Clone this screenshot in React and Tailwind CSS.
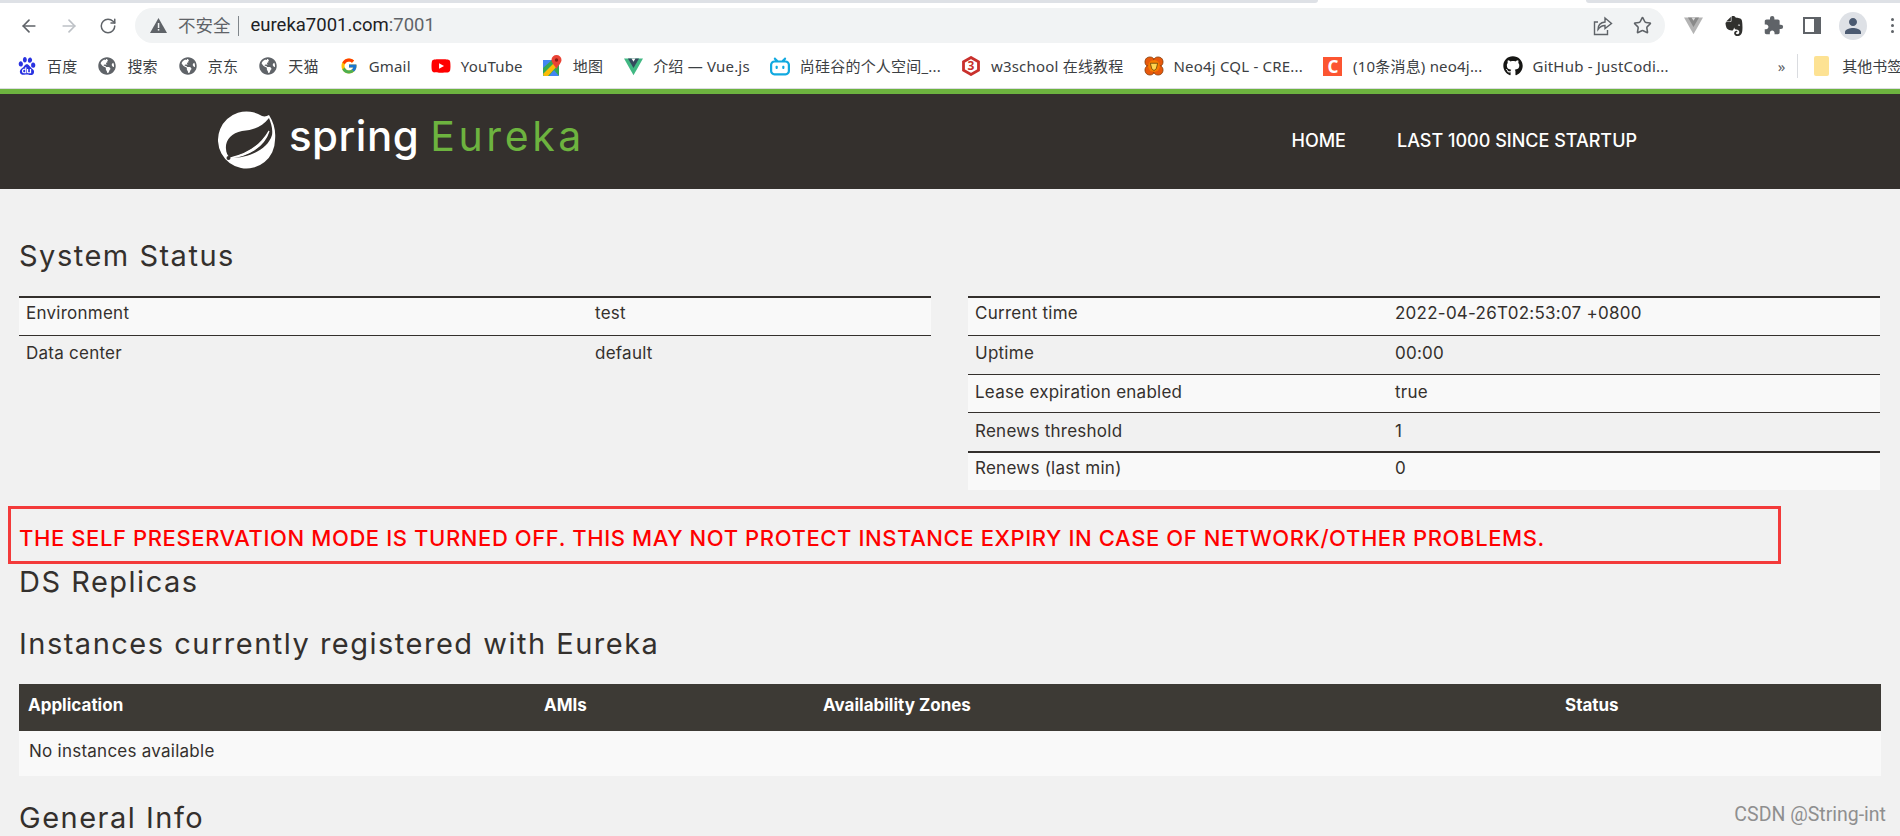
import React from 'react';
import { ArrowLeft, ArrowRight, RotateCw, Star } from 'lucide-react';
import { FaGithub, FaGlobeAmericas, FaYoutube } from 'react-icons/fa';
import { FcGoogle } from 'react-icons/fc';
import { MdExtension, MdPerson } from 'react-icons/md';
import { SiBaidu, SiBilibili, SiEvernote } from 'react-icons/si';

const ui = { fontFamily: '"Noto Sans", "Noto Sans CJK SC", sans-serif' };
const page = { fontFamily: 'Inter, "Noto Sans", sans-serif' };

function VueIcon({ size = 19, gray = false }) {
  return (
    <svg width={size} height={size} viewBox="0 0 24 24">
      <polygon points="0,2 24,2 12,23" fill={gray ? '#b4b4b4' : '#41b883'} />
      <polygon points="5,2 19,2 12,14" fill={gray ? '#8a8a8a' : '#35495e'} />
      <polygon points="9.500,2 14.500,2 12,6" fill={gray ? '#d8d8d8' : '#ffffff'} />
    </svg>
  );
}

function MapIcon() {
  return (
    <svg width="19" height="22" viewBox="0 0 19 22">
      <rect x="0" y="5" width="16" height="16" rx="1" fill="#34a853" />
      <polygon points="0,19 13,6 16,9 5,21 1,21" fill="#fbbc04" />
      <polygon points="0,5 9,5 0,13" fill="#4285f4" />
      <polygon points="6,21 11,15 16,21" fill="#4285f4" />
      <path d="M13.500 0a5 5 0 0 1 5 5c0 3-3 5-5 9-2-4-5-6-5-9a5 5 0 0 1 5-5z" fill="#ea4335" />
      <circle cx="13.500" cy="5" r="1.700" fill="#8c1c13" />
    </svg>
  );
}

function W3Icon() {
  return (
    <div className="relative w-[18px] h-[20px] flex items-center justify-center">
      <svg className="absolute inset-0" width="18" height="20" viewBox="0 0 18 20">
        <polygon points="9,1.500 16.500,5.700 16.500,14.300 9,18.500 1.500,14.300 1.500,5.700" fill="none" stroke="#c9302c" strokeWidth="2.800" />
      </svg>
      <span className="relative text-[12px] font-bold text-[#c9302c] leading-none">3</span>
    </div>
  );
}

function NeoIcon() {
  return (
    <svg width="22" height="22" viewBox="0 0 22 22">
      <circle cx="6.500" cy="6.500" r="5.500" fill="#e8590c" stroke="#7a3b0a" strokeWidth="0.800" />
      <circle cx="15.500" cy="6.500" r="5.500" fill="#e8590c" stroke="#7a3b0a" strokeWidth="0.800" />
      <circle cx="6.500" cy="15.500" r="5.500" fill="#e8590c" stroke="#7a3b0a" strokeWidth="0.800" />
      <circle cx="15.500" cy="15.500" r="5.500" fill="#e8590c" stroke="#7a3b0a" strokeWidth="0.800" />
      <circle cx="11" cy="11" r="6.500" fill="#f57c00" />
      <path d="M7 8h8l-1.500 6L11 16l-2.500-2z" fill="#ffd54f" stroke="#5d3a00" strokeWidth="0.800" />
    </svg>
  );
}

function SpringLeaf() {
  return (
    <svg width="58" height="58" viewBox="0 0 58 58" className="mt-[6px]">
      <path d="M51 4C56 12 58 20 57 29A28.500 28.500 0 1 1 44 5C47 6 49 5 51 4z" fill="#ffffff" />
      <path d="M51 7C44 16 36 19 24 20 13 22 7 30 8 38 8 42 10 45 12 47 32 47 50 38 54 24 55 18 53 12 51 7z" fill="#34302d" />
      <path d="M12 47C26 44 42 36 51 20 46 36 30 45 12 47z" fill="#ffffff" stroke="#ffffff" strokeWidth="1.200" />
      <circle cx="10.500" cy="47" r="2" fill="#34302d" />
    </svg>
  );
}

function Bookmark({ icon, label }) {
  return (
    <div className="flex items-center gap-[10px] shrink-0">
      <div className="w-[20px] flex justify-center">{icon}</div>
      <span className="text-[15px] leading-none tracking-[0.2px] text-[#3c4043] whitespace-nowrap">{label}</span>
    </div>
  );
}

function Browser() {
  const globe = <FaGlobeAmericas size={18} className="text-[#5f6368]" />;
  return (
    <div style={ui}>
      <div className="flex h-[3px] bg-white">
        <div className="w-[1318px] bg-[#dee1e6] rounded-br-[6px]" />
        <div className="flex-1" />
        <div className="w-[314px] bg-[#dee1e6] rounded-bl-[6px]" />
      </div>
      <div className="flex items-center h-[41px] bg-white pt-[4px]">
        <div className="flex items-center gap-[20px] pl-[19px] w-[135px]">
          <ArrowLeft size={20} className="text-[#5f6368]" />
          <ArrowRight size={20} className="text-[#bdc1c6]" />
          <RotateCw size={18} className="text-[#5f6368]" />
        </div>
        <div className="flex items-center w-[1530px] h-[35px] rounded-full bg-[#f1f3f4] pl-[15px] pr-[13px]">
          <svg width="17" height="15" viewBox="0 0 17 15">
            <polygon points="8.500,0 17,15 0,15" fill="#5f6368" />
            <rect x="7.800" y="5" width="1.500" height="5" fill="#f1f3f4" />
            <rect x="7.800" y="11" width="1.500" height="1.600" fill="#f1f3f4" />
          </svg>
          <span className="ml-[11px] text-[17.5px] text-[#5f6368] leading-none">不安全</span>
          <div className="ml-[7px] w-px h-[20px] bg-[#80868b]" />
          <span className="ml-[12px] text-[18.5px] text-[#202124] leading-none" style={{ fontFamily: 'Roboto, sans-serif' }}>
            eureka7001.com<span className="text-[#5f6368]">:7001</span>
          </span>
          <div className="ml-auto flex items-center gap-[20px]">
            <svg width="20" height="20" viewBox="0 0 20 20" fill="none" stroke="#5f6368" strokeWidth="1.400">
              <path d="M5 6H1.500v12.500h13V14" />
              <path d="M12 2l6.500 5.500-6.500 5v-3c-3 0-5 1-7 4 0-4 2.500-7 7-7.500z" />
            </svg>
            <Star size={19} strokeWidth={2} className="text-[#5f6368]" />
          </div>
        </div>
        <div className="flex items-center pl-[19px]">
          <VueIcon size={19} gray />
          <SiEvernote size={20} className="text-[#30302e] ml-[21px]" />
          <MdExtension size={21} className="text-[#5f6368] ml-[19px]" />
          <div className="w-[18px] h-[17px] border-[2.5px] border-[#5f6368] border-r-[7px] ml-[19px]" />
          <div className="w-[28px] h-[28px] rounded-full bg-[#dee1e6] flex items-center justify-center ml-[18px]">
            <MdPerson size={24} className="text-[#4b5a71]" />
          </div>
          <div className="flex flex-col gap-[3px] ml-[24px]">
            <div className="w-[3px] h-[3px] rounded-full bg-[#5f6368]" />
            <div className="w-[3px] h-[3px] rounded-full bg-[#5f6368]" />
            <div className="w-[3px] h-[3px] rounded-full bg-[#5f6368]" />
          </div>
        </div>
      </div>
      <div className="flex items-center h-[44px] bg-white pl-[17px] gap-[20px] overflow-hidden">
        <Bookmark icon={<SiBaidu size={18} className="text-[#2932e1]" />} label="百度" />
        <Bookmark icon={globe} label="搜索" />
        <Bookmark icon={globe} label="京东" />
        <Bookmark icon={globe} label="天猫" />
        <Bookmark icon={<FcGoogle size={18} />} label="Gmail" />
        <Bookmark icon={<FaYoutube size={20} className="text-[#ff0000]" />} label="YouTube" />
        <Bookmark icon={<MapIcon />} label="地图" />
        <Bookmark icon={<VueIcon />} label="介绍 — Vue.js" />
        <Bookmark icon={<SiBilibili size={21} className="text-[#11a9e0]" />} label="尚硅谷的个人空间_..." />
        <Bookmark icon={<W3Icon />} label="w3school 在线教程" />
        <Bookmark icon={<NeoIcon />} label="Neo4j CQL - CRE..." />
        <Bookmark
          icon={<div className="w-[19px] h-[19px] bg-[#fc5531] text-white text-[17px] leading-[19px] text-center font-bold">C</div>}
          label="(10条消息) neo4j..."
        />
        <Bookmark icon={<FaGithub size={20} className="text-[#161614]" />} label="GitHub - JustCodi..." />
        <div className="flex items-center shrink-0 ml-[89px]">
          <span className="text-[15px] text-[#5f6368] leading-none">»</span>
          <div className="ml-[12px] w-px h-[24px] bg-[#dadce0]" />
          <div className="ml-[16px] w-[15px] h-[20px] rounded-[2px] bg-[#fde293]" />
          <span className="ml-[13px] text-[15px] leading-none text-[#3c4043] whitespace-nowrap">其他书签</span>
        </div>
      </div>
      <div className="h-px bg-[#dadce0]" />
    </div>
  );
}

function Header() {
  return (
    <div className="h-[100px] bg-[#34302d] border-t-[5px] border-[#6db33f] flex items-center pl-[218px] pb-[9px]" style={page}>
      <SpringLeaf />
      <span className="ml-[13px] -mt-[2px] text-[42px] leading-none font-medium text-white tracking-[0.5px]">spring</span>
      <span className="ml-[11px] -mt-[2px] text-[41px] leading-none text-[#6db33f] tracking-[3.6px]">Eureka</span>
      <nav className="flex gap-[51px] ml-auto mr-[263px] mt-[6px] text-[18px] font-medium text-white">
        <span>HOME</span>
        <span>LAST 1000 SINCE STARTUP</span>
      </nav>
    </div>
  );
}

function Row({ label, value, thick, striped, labelClass }) {
  return (
    <div className={`flex h-[38.8px] items-center border-[#34302d] ${thick ? 'border-t-2 pb-[5px]' : 'border-t pb-[2px]'} ${striped ? 'bg-[#f9f9f9]' : ''}`}>
      <div className={`pl-[7px] ${labelClass}`}>{label}</div>
      <div>{value}</div>
    </div>
  );
}

function StatusTable({ rows, className, labelClass }) {
  return (
    <div className={`text-[17px] tracking-[0.25px] text-[#34302d] ${className}`}>
      {rows.map(([label, value], i) => (
        <Row key={label} label={label} value={value} thick={i === 0 || i === 4} striped={i % 2 === 0} labelClass={labelClass} />
      ))}
    </div>
  );
}

function Heading({ children, className }) {
  return <h2 className={`text-[29px] leading-[38px] tracking-[1.5px] text-[#34302d] ${className}`}>{children}</h2>;
}

function Content() {
  return (
    <div className="relative bg-[#f1f1f1] flex-1 overflow-hidden" style={page}>
      <div className="px-[19px]">
        <Heading className="pt-[48px]">System Status</Heading>
        <div className="flex gap-[37px] mt-[21px]">
          <StatusTable
            className="w-[912px]"
            labelClass="w-[576px]"
            rows={[
              ['Environment', 'test'],
              ['Data center', 'default'],
            ]}
          />
          <StatusTable
            className="w-[912px]"
            labelClass="w-[427px]"
            rows={[
              ['Current time', '2022-04-26T02:53:07 +0800'],
              ['Uptime', '00:00'],
              ['Lease expiration enabled', 'true'],
              ['Renews threshold', '1'],
              ['Renews (last min)', '0'],
            ]}
          />
        </div>
      </div>
      <div className="mt-[16px] ml-[8px] w-[1773px] h-[58px] border-[3px] border-[#f33a3a] flex items-center pl-[8px] pt-[8px] text-[22px] font-medium tracking-[0.6px] text-[#ff0000] whitespace-nowrap">
        THE SELF PRESERVATION MODE IS TURNED OFF. THIS MAY NOT PROTECT INSTANCE EXPIRY IN CASE OF NETWORK/OTHER PROBLEMS.
      </div>
      <div className="px-[19px]">
        <Heading className="-mt-[1px]">DS Replicas</Heading>
        <Heading className="mt-[24px]">Instances currently registered with Eureka</Heading>
        <div className="mt-[21px] text-[17px]">
          <div className="flex h-[47px] items-center pb-[4px] bg-[#3d3a35] text-white font-bold">
            <div className="w-[525px] pl-[9px]">Application</div>
            <div className="w-[279px]">AMIs</div>
            <div className="w-[742px]">Availability Zones</div>
            <div>Status</div>
          </div>
          <div className="flex h-[45px] items-center pb-[3px] bg-[#f9f9f9] pl-[10px] tracking-[0.25px] text-[#34302d]">No instances available</div>
        </div>
        <Heading className="mt-[23px]">General Info</Heading>
      </div>
      <span className="absolute right-[14px] bottom-[12px] text-[19.5px] leading-none text-[#8f8f8f]" style={{ fontFamily: 'Roboto, sans-serif' }}>CSDN @String-int</span>
    </div>
  );
}

export default function App() {
  return (
    <div className="w-[1900px] h-[836px] flex flex-col overflow-hidden">
      <Browser />
      <Header />
      <Content />
    </div>
  );
}
